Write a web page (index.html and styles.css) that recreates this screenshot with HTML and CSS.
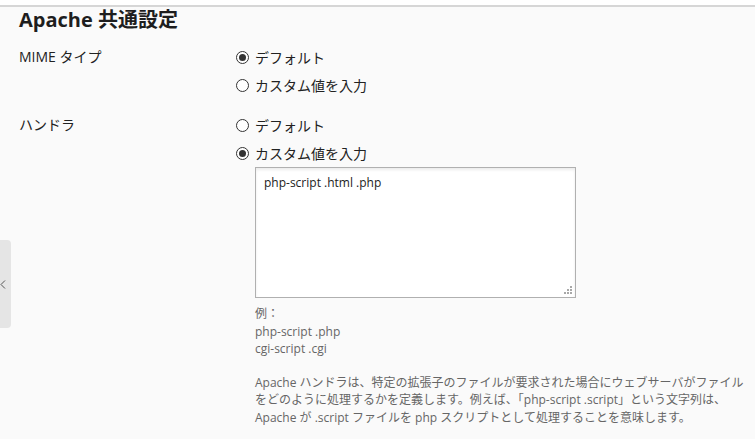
FILE: index.html
```html
<!DOCTYPE html>
<html lang="ja">
<head>
<meta charset="utf-8">
<link rel="stylesheet" href="styles.css">
</head>
<body>
<div class="topbar"></div>
<div class="side-tab"><svg width="6" height="9" viewBox="0 0 6 9"><path d="M5 0.5 L1 4.5 L5 8.5" fill="none" stroke="#555" stroke-width="1"/></svg></div>
<main class="content">
  <h2 class="title">Apache 共通設定</h2>
  <div class="row">
    <div class="label">MIME タイプ</div>
    <div class="field">
      <label class="opt"><input type="radio" name="mime" checked><span>デフォルト</span></label>
      <label class="opt"><input type="radio" name="mime"><span>カスタム値を入力</span></label>
    </div>
  </div>
  <div class="row">
    <div class="label">ハンドラ</div>
    <div class="field">
      <label class="opt"><input type="radio" name="handler"><span>デフォルト</span></label>
      <label class="opt"><input type="radio" name="handler" checked><span>カスタム値を入力</span></label>
      <div class="ta-wrap">
        <textarea class="ta">php-script .html .php</textarea>
        <svg class="grip" width="8" height="8" viewBox="0 0 8 8"><g fill="#a8a8a8"><rect x="6" y="0" width="2" height="2"/><rect x="3" y="3" width="2" height="2"/><rect x="6" y="3" width="2" height="2"/><rect x="0" y="6" width="2" height="2"/><rect x="3" y="6" width="2" height="2"/><rect x="6" y="6" width="2" height="2"/></g></svg>
      </div>
      <div class="help">
        <div>例：</div>
        <div>php-script .php</div>
        <div>cgi-script .cgi</div>
        <p class="desc">Apache ハンドラは、特定の拡張子のファイルが要求された場合にウェブサーバがファイル<br>をどのように処理するかを定義します。例えば、「php-script .script」という文字列は、<br>Apache が .script ファイルを php スクリプトとして処理することを意味します。</p>
      </div>
    </div>
  </div>
</main>
</body>
</html>
```
FILE: styles.css
```css
html, body {
  margin: 0;
  padding: 0;
  background: #fafafa;
  font-family: "Open Sans", "Noto Sans CJK JP", sans-serif;
  color: #222;
}
.topbar {
  height: 5px;
  background: #fff;
  border-bottom: 2px solid #d6d6d6;
}
.side-tab {
  position: absolute;
  left: 0;
  top: 240px;
  width: 11px;
  height: 88px;
  background: #e5e5e5;
  border-radius: 0 4px 4px 0;
  display: flex;
  align-items: center;
}
.content {
  padding-left: 19px;
}
.title {
  margin: 0;
  padding-top: 2px;
  font-size: 20px;
  font-weight: 700;
  line-height: 22px;
  color: #1e1e1e;
}
.row {
  display: grid;
  grid-template-columns: 217px 1fr;
  margin-top: 12px;
}
.row + .row { margin-top: 12px; }
.label {
  font-size: 14px;
  line-height: 28px;
  color: #222;
}
.field {
  display: flex;
  flex-direction: column;
  align-items: flex-start;
}
.opt {
  display: flex;
  align-items: center;
  height: 28px;
  font-size: 14px;
  color: #222;
}
.opt input {
  appearance: none;
  -webkit-appearance: none;
  width: 13px;
  height: 13px;
  margin: 0 6px 0 0;
  border: 1px solid #333;
  border-radius: 50%;
  background: #fff;
  box-sizing: border-box;
  position: relative;
}
.opt input:checked::after {
  content: "";
  position: absolute;
  left: 2px;
  top: 2px;
  width: 7px;
  height: 7px;
  border-radius: 50%;
  background: #333;
}
.ta-wrap {
  position: relative;
  margin-left: 19px;
  width: 321px;
  height: 131px;
}
.ta {
  display: block;
  margin: 0;
  width: 321px;
  height: 131px;
  box-sizing: border-box;
  border: 1px solid #b0b0b0;
  box-shadow: inset 0 2px 3px rgba(0,0,0,0.08);
  background: #fff;
  padding: 6px 8px;
  font-family: "Open Sans", "Noto Sans CJK JP", sans-serif;
  font-size: 12px;
  line-height: 17px;
  color: #222;
  resize: none;
  outline: none;
}
.grip {
  position: absolute;
  right: 4px;
  bottom: 4px;
}
.help {
  margin-left: 19px;
  margin-top: 7px;
  font-size: 12px;
  line-height: 17.5px;
  color: #666;
  white-space: nowrap;
}
.desc {
  margin: 16px 0 0 0;
}
```
